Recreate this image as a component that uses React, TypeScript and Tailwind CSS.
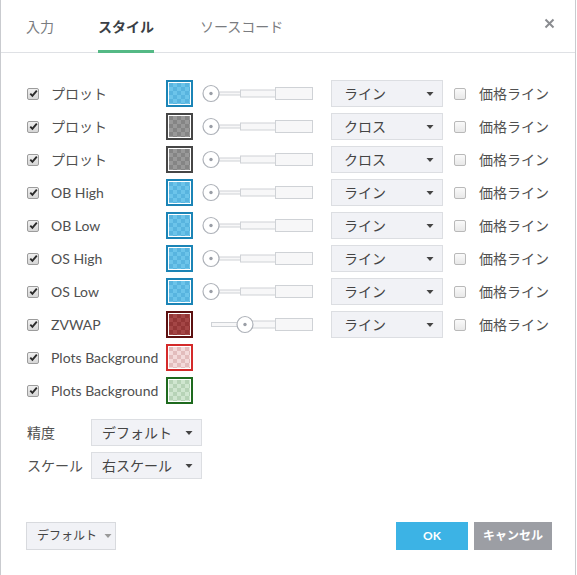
import React from "react";

const FONT = { fontFamily: '"Lato", "Noto Sans CJK JP", sans-serif' };

type SwatchKind = "blue" | "gray" | "red" | "pink" | "green";

const SW: Record<SwatchKind, { border: string; a: string; b: string }> = {
  blue: { border: "#1b84b6", a: "#6cc4ea", b: "#58b4df" },
  gray: { border: "#464646", a: "#999999", b: "#858585" },
  red: { border: "#5c1010", a: "#a44646", b: "#933636" },
  pink: { border: "#d42a2a", a: "#f3dada", b: "#e2bcbc" },
  green: { border: "#1e6a1e", a: "#d0e6d0", b: "#b7d3b7" },
};

let swId = 0;

function Swatch({ kind }: { kind: SwatchKind }) {
  const c = SW[kind];
  const id = React.useMemo(() => `chk${swId++}`, []);
  return (
    <div
      className="w-[27px] h-[27px] border-2 bg-white p-[1px] shrink-0"
      style={{ borderColor: c.border }}
    >
      <svg width="21" height="21" viewBox="0 0 21 21" className="block">
        <defs>
          <pattern id={id} width="8" height="8" patternUnits="userSpaceOnUse">
            <rect width="8" height="8" fill={c.a} />
            <rect width="4" height="4" fill={c.b} />
            <rect x="4" y="4" width="4" height="4" fill={c.b} />
          </pattern>
        </defs>
        <rect width="21" height="21" fill={`url(#${id})`} />
      </svg>
    </div>
  );
}

function Slider({ pos }: { pos: "start" | "mid" }) {
  const stroke = "#cfd2d6";
  const fill = "#f7f7f8";
  return (
    <svg width="112" height="19" viewBox="0 0 112 19" className="block shrink-0">
      {pos === "start" ? (
        <>
          <rect x="17" y="8" width="22" height="3" fill={fill} stroke={stroke} strokeWidth="1" />
          <rect x="38.5" y="6" width="35" height="7" fill={fill} stroke={stroke} strokeWidth="1" />
          <rect x="73.5" y="3.5" width="37" height="12" fill={fill} stroke={stroke} strokeWidth="1" />
          <circle cx="9" cy="9.5" r="8" fill="#fff" stroke="#aeb2b9" strokeWidth="1.2" />
          <circle cx="9" cy="9.5" r="1.7" fill="#9a9ea6" />
        </>
      ) : (
        <>
          <rect x="9.5" y="7.5" width="28" height="4" fill={fill} stroke={stroke} strokeWidth="1" />
          <rect x="50" y="6" width="24" height="7" fill={fill} stroke={stroke} strokeWidth="1" />
          <rect x="73.5" y="3.5" width="37" height="12" fill={fill} stroke={stroke} strokeWidth="1" />
          <circle cx="43" cy="9.5" r="8" fill="#fff" stroke="#aeb2b9" strokeWidth="1.2" />
          <circle cx="43" cy="9.5" r="1.7" fill="#9a9ea6" />
        </>
      )}
    </svg>
  );
}

function Check({ checked }: { checked: boolean }) {
  return checked ? (
    <div className="w-[12px] h-[12px] rounded-[2px] border border-[#9c9c9c] bg-gradient-to-b from-[#f0f0f0] to-[#d6d6d6] flex items-center justify-center shrink-0">
      <svg width="9" height="9" viewBox="0 0 9 9" className="block">
        <path d="M1.3 4.6 L3.4 6.8 L7.8 1.6" fill="none" stroke="#2a2a2a" strokeWidth="1.9" />
      </svg>
    </div>
  ) : (
    <div className="w-[12px] h-[12px] rounded-[2px] border border-[#b9b9b9] bg-gradient-to-b from-[#fafafa] to-[#e8e8e8] shrink-0" />
  );
}

function Caret({ color = "#444" }: { color?: string }) {
  return (
    <svg width="8" height="4" viewBox="0 0 8 4" className="block shrink-0">
      <path d="M0.5 0 L7.5 0 L4 4 Z" fill={color} />
    </svg>
  );
}

function Select({ text, w, textPl = 12 }: { text: string; w: number; textPl?: number }) {
  return (
    <div
      className="h-[27px] bg-[#f1f2f6] border border-[#dcdee2] flex items-center justify-between pr-[8px] shrink-0 text-[14px] text-[#444]"
      style={{ width: w, paddingLeft: textPl }}
    >
      <span className="leading-none whitespace-nowrap">{text}</span>
      <Caret />
    </div>
  );
}

type RowDef = {
  label: string;
  swatch: SwatchKind;
  slider?: "start" | "mid";
  select?: string;
};

const rows: RowDef[] = [
  { label: "プロット", swatch: "blue", slider: "start", select: "ライン" },
  { label: "プロット", swatch: "gray", slider: "start", select: "クロス" },
  { label: "プロット", swatch: "gray", slider: "start", select: "クロス" },
  { label: "OB High", swatch: "blue", slider: "start", select: "ライン" },
  { label: "OB Low", swatch: "blue", slider: "start", select: "ライン" },
  { label: "OS High", swatch: "blue", slider: "start", select: "ライン" },
  { label: "OS Low", swatch: "blue", slider: "start", select: "ライン" },
  { label: "ZVWAP", swatch: "red", slider: "mid", select: "ライン" },
  { label: "Plots Background", swatch: "pink" },
  { label: "Plots Background", swatch: "green" },
];

function Row({ r }: { r: RowDef }) {
  return (
    <div className="flex items-center h-[27px]">
      <Check checked />
      <div className="ml-[12px] w-[115px] text-[14px] text-[#505050] leading-none whitespace-nowrap">
        {r.label}
      </div>
      <Swatch kind={r.swatch} />
      {r.slider && (
        <>
          <div className="ml-[9px]">
            <Slider pos={r.slider} />
          </div>
          <div className="ml-[17px]">
            <Select text={r.select!} w={112} />
          </div>
          <div className="ml-[11px]">
            <Check checked={false} />
          </div>
          <div className="ml-[13px] text-[14px] text-[#505050] leading-none whitespace-nowrap">
            価格ライン
          </div>
        </>
      )}
    </div>
  );
}

export default function App() {
  return (
    <div className="w-[577px] h-[575px] bg-white overflow-hidden relative" style={FONT}>
      <div className="w-[576px] h-[575px] border-l border-r border-[#c9cbcf] bg-white flex flex-col">
        {/* Header */}
        <div className="h-[53px] border-b border-[#dfe1e5] flex items-stretch relative shrink-0">
          <div className="flex items-stretch pl-[25px] gap-[44px]">
            <div className="flex items-center text-[14px] text-[#7a7c80]">入力</div>
            <div className="flex items-center text-[14px] font-bold text-[#3b3f46] relative">
              スタイル
              <div className="absolute left-0 right-0 bottom-[-1px] h-[3px] bg-[#54b985]" />
            </div>
            <div className="flex items-center text-[14px] text-[#7a7c80] ml-[2px]">ソースコード</div>
          </div>
          <div className="absolute right-[20px] top-[18px]">
            <svg width="11" height="11" viewBox="0 0 11 11" className="block">
              <path d="M1.5 1.5 L9.5 9.5 M9.5 1.5 L1.5 9.5" stroke="#8a8c90" strokeWidth="2" />
            </svg>
          </div>
        </div>

        {/* Body */}
        <div className="pl-[26px] pt-[27px] flex flex-col gap-[6px]">
          {rows.map((r, i) => (
            <Row key={i} r={r} />
          ))}
        </div>

        <div className="pl-[26px] mt-[15px] flex flex-col gap-[6px]">
          <div className="flex items-center h-[27px]">
            <div className="w-[64px] text-[14px] text-[#505050] leading-none">精度</div>
            <Select text="デフォルト" w={111} textPl={10} />
          </div>
          <div className="flex items-center h-[27px]">
            <div className="w-[64px] text-[14px] text-[#505050] leading-none whitespace-nowrap">スケール</div>
            <Select text="右スケール" w={111} textPl={10} />
          </div>
        </div>

        {/* Footer */}
        <div className="mt-[43px] pl-[25px] pr-[23px] flex items-center justify-between">
          <div className="h-[28px] w-[90px] bg-[#f1f2f6] border border-[#d8dade] flex items-center pl-[10px] gap-[7px] text-[12px] text-[#444] whitespace-nowrap">
            <span className="leading-none">デフォルト</span>
            <Caret color="#9a9a9a" />
          </div>
          <div className="flex items-center gap-[6px]">
            <div className="h-[28px] w-[72px] bg-[#3cb3e5] text-white text-[12px] font-bold flex items-center justify-center">
              OK
            </div>
            <div className="h-[28px] w-[78px] bg-[#9c9ea4] text-white text-[12px] font-bold flex items-center justify-center">
              キャンセル
            </div>
          </div>
        </div>
      </div>
    </div>
  );
}
